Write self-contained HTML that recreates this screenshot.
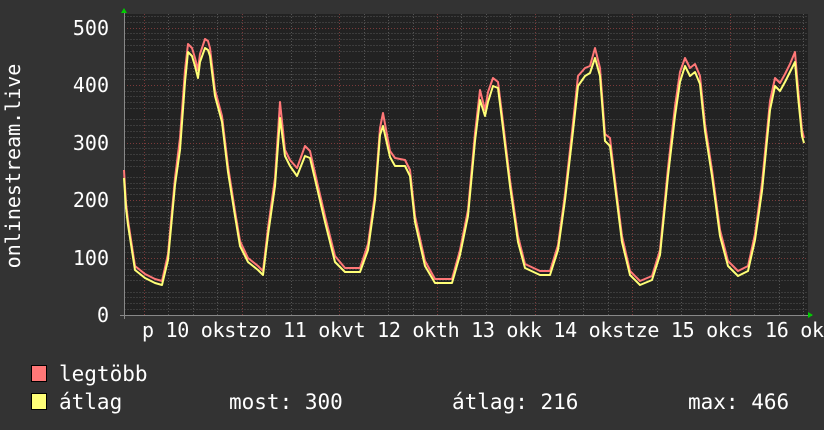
<!DOCTYPE html>
<html><head><meta charset="utf-8"><style>
body{margin:0;width:824px;height:430px;background:#333;overflow:hidden;font-family:"DejaVu Sans Mono","Liberation Mono",monospace;}
svg{position:absolute;left:0;top:0}
text{font-family:"DejaVu Sans Mono","Liberation Mono",monospace;fill:#fff}
</style></head><body>
<svg width="824" height="430" viewBox="0 0 824 430">
<rect x="124" y="14" width="684" height="301" fill="#222"/>
<g stroke="#555" stroke-width="1" stroke-dasharray="1,2">
<path d="M124.5 309.5H808M124.5 303.5H808M124.5 297.5H808M124.5 292.5H808M124.5 280.5H808M124.5 275.5H808M124.5 269.5H808M124.5 263.5H808M124.5 252.5H808M124.5 246.5H808M124.5 240.5H808M124.5 234.5H808M124.5 223.5H808M124.5 217.5H808M124.5 211.5H808M124.5 206.5H808M124.5 194.5H808M124.5 188.5H808M124.5 183.5H808M124.5 177.5H808M124.5 166.5H808M124.5 160.5H808M124.5 154.5H808M124.5 148.5H808M124.5 137.5H808M124.5 131.5H808M124.5 125.5H808M124.5 119.5H808M124.5 108.5H808M124.5 102.5H808M124.5 96.5H808M124.5 91.5H808M124.5 79.5H808M124.5 74.5H808M124.5 68.5H808M124.5 62.5H808M124.5 51.5H808M124.5 45.5H808M124.5 39.5H808M124.5 33.5H808M124.5 22.5H808M124.5 16.5H808"/>
<path d="M168.5 14V315M193.5 14V315M217.5 14V315M266.5 14V315M291.5 14V315M315.5 14V315M364.5 14V315M388.5 14V315M413.5 14V315M461.5 14V315M486.5 14V315M510.5 14V315M559.5 14V315M583.5 14V315M608.5 14V315M657.5 14V315M681.5 14V315M705.5 14V315M754.5 14V315M779.5 14V315M803.5 14V315"/>
</g>
<g stroke="#7a3a3a" stroke-width="1" stroke-dasharray="1,2">
<path d="M124 28.5H808M124 85.5H808M124 143.5H808M124 200.5H808M124 258.5H808"/>
<path d="M144.5 14V315M242.5 14V315M339.5 14V315M437.5 14V315M535.5 14V315M632.5 14V315M730.5 14V315"/>
</g>
<path d="M120 315.5H812M124.5 12V319" stroke="#888" stroke-width="1"/>
<path d="M124 8l-3 5h6z" fill="#0c0"/><path d="M813 315l-5-3v6z" fill="#0c0"/>
<g fill="none" stroke-linejoin="round" stroke-width="2">
<polyline stroke="#f77" transform="translate(0,-2)" points="124,172 126,205 128,222 135,268 145,276 155,281 162,283 168,256 175,180 180,140 185,72 188,46 192,50 195,60 198,72 200,56 205,41 208,43 210,50 215,92 222,118 228,168 235,213 240,243 248,260 258,268 263,273 268,230 275,180 280,104 285,152 290,162 297,170 305,148 310,153 318,188 325,218 335,258 345,270 360,270 368,246 375,196 380,130 383,115 390,153 395,160 405,162 410,172 415,218 425,263 435,281 452,281 460,252 468,212 475,135 480,92 485,112 488,94 493,80 498,84 502,116 510,182 518,238 525,266 540,273 550,273 558,247 565,196 572,134 578,78 585,70 590,68 595,50 600,70 605,136 610,140 615,182 622,238 630,273 640,283 652,278 660,252 668,170 675,108 680,74 685,60 690,70 695,66 700,78 705,126 712,172 720,232 728,263 738,273 748,268 755,236 762,185 770,103 775,80 780,85 785,76 790,66 795,54 798,90 802,132 804,140"/>
<polyline stroke="#ff7" points="124,178 126,208 128,225 135,270 145,278 155,283 162,285 168,260 175,185 180,150 185,82 188,52 192,56 195,66 198,78 200,62 205,48 208,50 210,56 215,96 222,122 228,172 235,216 240,246 248,262 258,270 263,275 268,235 275,186 280,118 285,156 290,166 297,176 305,156 310,158 318,192 325,222 335,262 345,272 360,272 368,250 375,200 380,135 383,126 390,157 395,166 405,166 410,176 415,222 425,266 435,283 452,283 460,255 468,216 475,141 480,100 485,116 488,102 493,86 498,88 502,120 510,186 518,242 525,268 540,275 550,275 558,250 565,200 572,140 578,86 585,76 590,73 595,58 600,76 605,141 610,146 615,186 622,242 630,275 640,285 652,280 660,255 668,176 675,116 680,82 685,66 690,76 695,72 700,84 705,131 712,176 720,236 728,266 738,276 748,271 755,240 762,191 770,110 775,86 780,91 785,82 790,72 795,62 798,96 802,136 804,143"/>
</g>
<g font-size="20" text-anchor="end">
<text x="109" y="35">500</text><text x="109" y="92">400</text><text x="109" y="150">300</text><text x="109" y="207">200</text><text x="109" y="265">100</text><text x="109" y="322">0</text>
</g>
<text font-size="20" transform="translate(20,166) rotate(-90)" text-anchor="middle">onlinestream.live</text>
<text font-size="20" x="142" y="337" textLength="682" lengthAdjust="spacing">p 10 okstzo 11 okvt 12 okth 13 okk 14 okstze 15 okcs 16 ok</text>
<rect x="31.5" y="365.5" width="15" height="16" fill="#f77" stroke="#000"/>
<rect x="31.5" y="393.5" width="15" height="16" fill="#ff7" stroke="#000"/>
<g font-size="21">
<text x="59" y="381">legtöbb</text>
<text x="59" y="409">átlag</text>
<text x="229" y="409">most: 300</text>
<text x="452" y="409">átlag: 216</text>
<text x="688" y="409">max: 466</text>
</g>
</svg>
</body></html>
